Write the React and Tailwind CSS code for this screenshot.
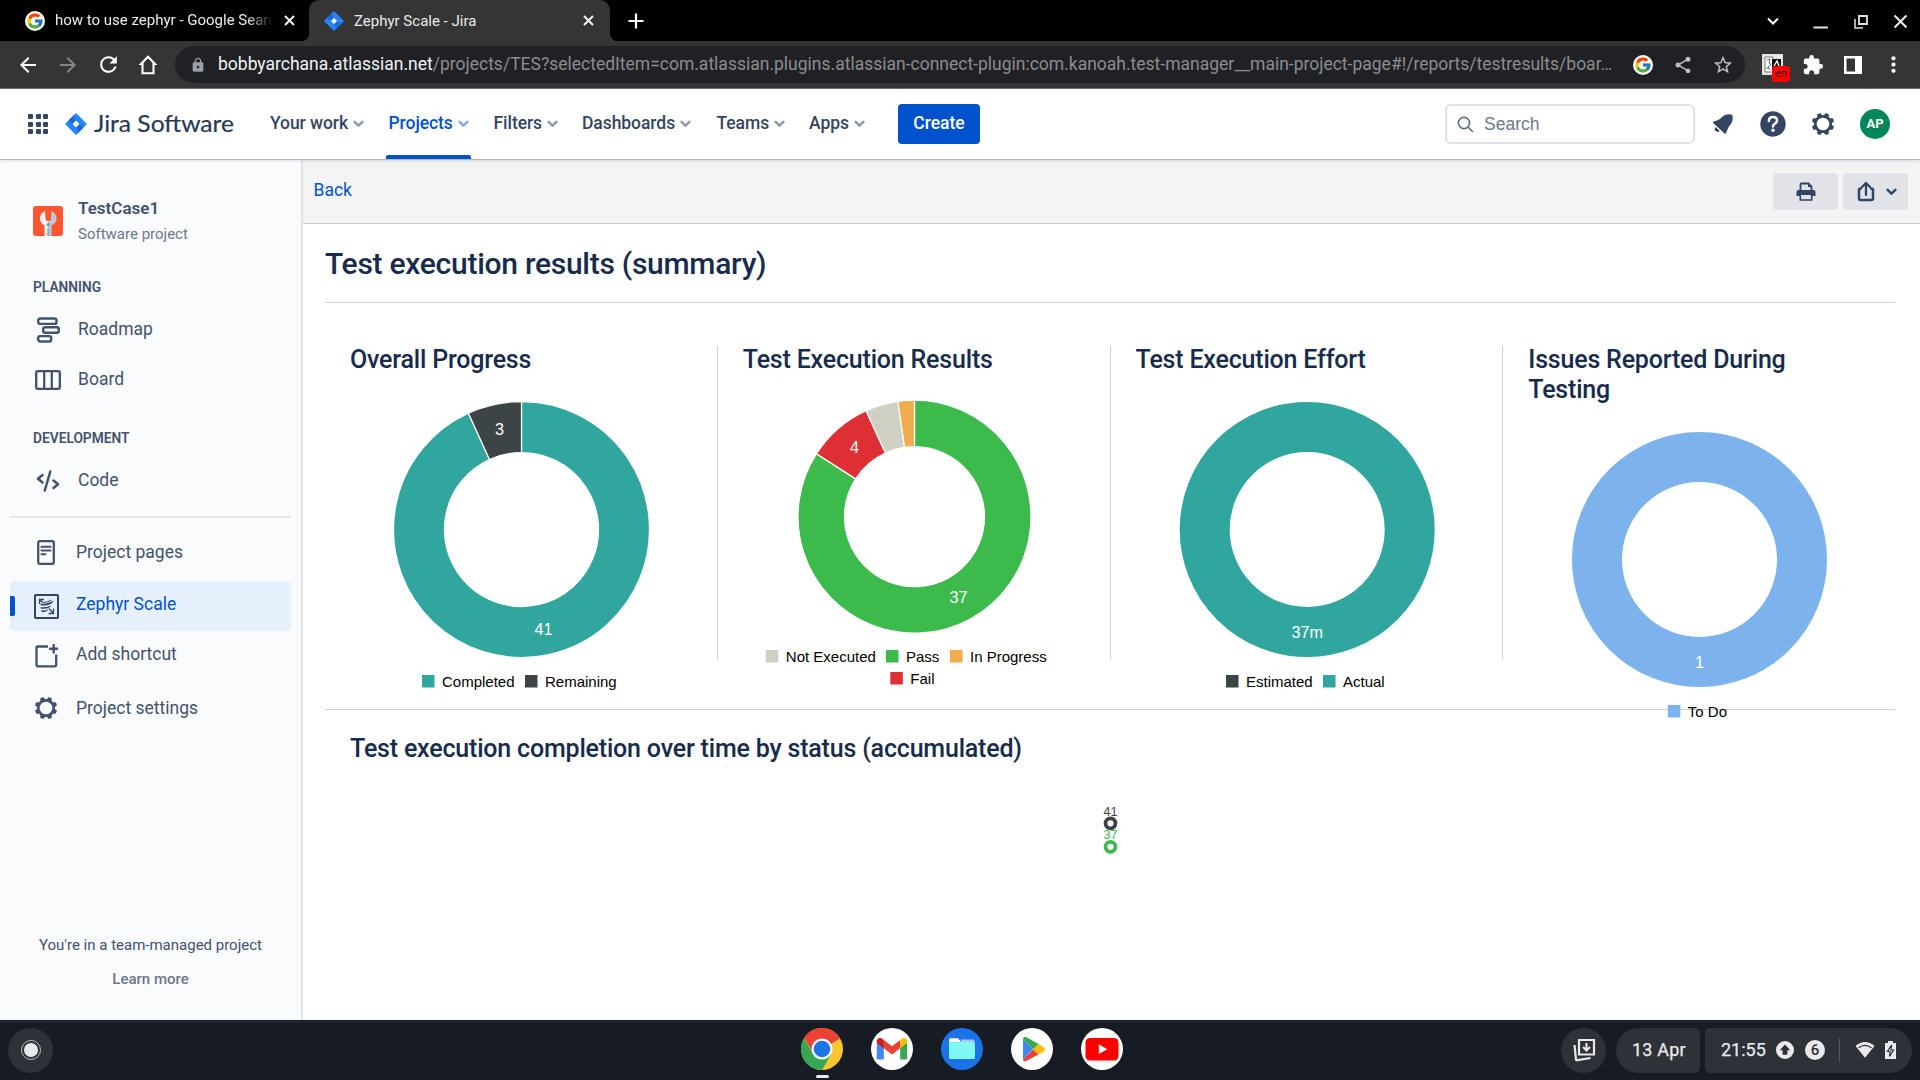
import React from "react";
import { FcGoogle } from "react-icons/fc";
import { MdShare, MdStarBorder, MdExtension, MdMoreVert, MdLock, MdRefresh, MdArrowBack, MdArrowForward } from "react-icons/md";

const TEAL = "#31a69e";
const DARK = "#3d4446";
const GREEN = "#3cba4c";

function JiraMark({ size }) {
  return (
    <svg width={size} height={size} viewBox="0 0 26 26" className="shrink-0">
      <path d="M13 0 L26 13 L13 26 L0 13 Z" fill="#2684ff" />
      <path d="M13 0 C9.5 3.5 9.5 6 13 9.2 L9.2 13 L4 9 Z" fill="#1868db" />
      <path d="M13 26 C16.5 22.500 16.5 20 13 16.800 L16.8 13 L22 17 Z" fill="#1868db" />
      <path d="M13 9 L17 13 L13 17 L9 13 Z" fill="#fff" />
    </svg>
  );
}

function GoogleDisc() {
  return (
    <span className="flex h-5 w-5 shrink-0 items-center justify-center rounded-full bg-white">
      <FcGoogle size={18} />
    </span>
  );
}

function Cross({ size = 11, w = 2 }) {
  return (
    <svg width={size} height={size} viewBox="0 0 11 11" className="shrink-0">
      <path d="M1 1 L10 10 M10 1 L1 10" stroke="#f1f1f1" strokeWidth={w} fill="none" />
    </svg>
  );
}

function Chevron({ color = "#8f99ab", w = 11 }) {
  return (
    <svg width={w} height="8" viewBox="0 0 11 8" className="shrink-0">
      <path d="M1.600 1.800 L5.500 5.700 L9.400 1.800" stroke={color} strokeWidth="2.500" fill="none" strokeLinecap="round" strokeLinejoin="round" />
    </svg>
  );
}

function Gear({ size, color }) {
  return (
    <svg width={size} height={size} viewBox="0 0 24 24" className="shrink-0">
      <circle cx="12" cy="12" r="7.700" fill="none" stroke={color} strokeWidth="2.700" />
      {[22.5, 67.5, 112.5, 157.5, 202.5, 247.5, 292.5, 337.5].map((a) => (
        <path key={a} d="M9.500 4 L10 1.200 Q12 0 14 1.200 L14.500 4 Z" fill={color} transform={`rotate(${a} 12 12)`} />
      ))}
    </svg>
  );
}

function TabStrip() {
  return (
    <div className="flex h-[41px] items-stretch bg-black text-[#e8eaed]">
      <div className="flex w-[309px] items-center pl-[25px]">
        <GoogleDisc />
        <span className="ml-[10px] w-[218px] overflow-hidden whitespace-nowrap [mask-image:linear-gradient(to_right,black_88%,transparent)] text-[15px]">how to use zephyr - Google Search</span>
        <span className="ml-[11px]"><Cross /></span>
      </div>
      <div className="relative flex w-[301px] items-center rounded-t-[10px] bg-[#353535] pl-[15px]">
        <span className="absolute bottom-0 -left-[8px] h-2 w-2 bg-[radial-gradient(circle_at_0_0,transparent_8px,#353535_8.500px)]" />
        <span className="absolute bottom-0 -right-[8px] h-2 w-2 bg-[radial-gradient(circle_at_100%_0,transparent_8px,#353535_8.500px)]" />
        <JiraMark size={20} />
        <span className="ml-[10px] flex-1 pt-px text-[15px]">Zephyr Scale - Jira</span>
        <span className="mr-[16px]"><Cross /></span>
      </div>
      <div className="flex flex-1 items-center pl-[18px]">
        <svg width="16" height="16" viewBox="0 0 16 16"><path d="M8 0.500 V15.500 M0.500 8 H15.500" stroke="#fff" strokeWidth="2.200" /></svg>
      </div>
      <div className="flex w-[160px] items-center pl-[6px]">
        <svg width="154" height="20" viewBox="0 0 154 20">
          <path d="M2 7.500 L7 12.500 L12 7.500" fill="none" stroke="#fff" strokeWidth="2" />
          <path d="M47.500 16.500 H62" stroke="#e4e4e4" strokeWidth="2" />
          <path d="M93 5 H101 V13 H93 Z" fill="none" stroke="#e4e4e4" strokeWidth="1.800" />
          <path d="M89 8 V17 H97" fill="none" stroke="#e4e4e4" strokeWidth="1.500" />
          <path d="M128.500 4.500 L140.500 16.500 M140.500 4.500 L128.500 16.500" stroke="#eee" strokeWidth="2" />
        </svg>
      </div>
    </div>
  );
}

function Toolbar() {
  return (
    <div className="flex h-[48px] items-center border-b border-[#6a6a6a] bg-[#353535] text-white">
      <div className="flex w-[175px] items-center">
        <MdArrowBack size={24} className="ml-[16px]" />
        <MdArrowForward size={24} className="ml-[16px] text-[#858585]" />
        <MdRefresh size={25} className="ml-[16px]" />
        <svg width="18" height="20" viewBox="0 0 18 20" className="ml-[18px]">
          <path d="M9 1.800 L16 9 H14.500 V18.300 H3.500 V9 H2 Z" fill="none" stroke="#fff" strokeWidth="2.100" />
        </svg>
      </div>
      <div className="flex h-[37px] w-[1570px] items-center rounded-full bg-[#202124]">
        <MdLock size={16} className="ml-[15px] text-[#9aa0a6]" />
        <span className="ml-[12px] w-[1398px] text-[17.5px] whitespace-nowrap text-[#8b8d90]">
          <span className="text-[#f1f3f4]">bobbyarchana.atlassian.net</span>/projects/TES?selectedItem=com.atlassian.plugins.atlassian-connect-plugin:com.kanoah.test-manager__main-project-page#!/reports/testresults/boar…
        </span>
        <span className="ml-[17px]"><GoogleDisc /></span>
        <MdShare size={20} className="ml-[20px] text-[#bdc1c6]" />
        <MdStarBorder size={22} className="ml-[19px] text-[#bdc1c6]" />
      </div>
      <div className="relative ml-[17px] h-[21px] w-[21px] border border-[#ddd] bg-[#e9e9e9]">
        <svg width="19" height="19" viewBox="0 0 19 19">
          <path d="M2 2 H10 V17 H2 Z" fill="#fff" stroke="#777" strokeWidth="1" />
          <path d="M4 5 L7 4 L6 8 L8 9 L5 12 L7 15 M3 13 H6" fill="none" stroke="#666" strokeWidth="1" />
          <path d="M9 4 H18 V14 H9 Z" fill="#111" />
          <path d="M11 11 L14 6 L16 11" fill="none" stroke="#fff" strokeWidth="1.300" />
        </svg>
        <span className="absolute top-[11px] left-[9px] flex h-[16px] w-[18px] items-center justify-center rounded-[3px] bg-[#ff0000] pb-px text-[11.5px] leading-none text-[#3a0000]">en</span>
      </div>
      <MdExtension size={22} className="ml-[19px]" />
      <svg width="18" height="18" viewBox="0 0 18 18" className="ml-[20px]">
        <path d="M0 0 H18 V18 H0 Z M2.500 2.500 V15.500 H11 V2.500 Z" fill="#fff" fillRule="evenodd" />
      </svg>
      <MdMoreVert size={25} className="ml-[19px]" />
    </div>
  );
}

const NAV = [
  { t: "Your work", w: 118.5 },
  { t: "Projects", w: 105 },
  { t: "Filters", w: 88.5 },
  { t: "Dashboards", w: 134.5 },
  { t: "Teams", w: 92.5 },
  { t: "Apps", w: 89 },
];

function Header() {
  return (
    <div className="relative z-10 flex h-[71px] items-center border-b border-[#b5b6bb] bg-white shadow-[0_1px_4px_rgba(9,30,66,0.13)]">
      <div className="ml-[28px] grid grid-cols-3 gap-[2.500px]">
        {[0, 1, 2, 3, 4, 5, 6, 7, 8].map((i) => (
          <span key={i} className="h-[5px] w-[5px] rounded-[1px] bg-[#344563]" />
        ))}
      </div>
      <div className="ml-[17px]"><JiraMark size={22} /></div>
      <svg width="176" height="34" viewBox="0 0 176 34" className="ml-[7px]">
        <text x="0" y="24.500" textLength="140" lengthAdjust="spacingAndGlyphs" fontFamily="Lato, sans-serif" fontSize="23.500" fill="#253858" stroke="#253858" strokeWidth="0.200">Jira Software</text>
      </svg>
      {NAV.map((n) => {
        const on = n.t === "Projects";
        return (
          <div
            key={n.t}
            style={{ width: n.w }}
            className={`relative flex h-full items-center gap-[5px] text-[17.5px] font-medium tracking-[-0.06px] whitespace-nowrap ${on ? "text-[#0052cc]" : "text-[#344563]"}`}
          >
            <span className="pb-[2px]">{n.t}</span>
            <Chevron color={on ? "#7fa8e5" : "#8f99ab"} />
            {on && <span className="absolute bottom-0 -left-[3px] h-[4px] w-[85px] rounded-t-[2px] bg-[#0052cc]" />}
          </div>
        );
      })}
      <button className="h-[40px] w-[82px] rounded-[4px] bg-[#0052cc] pb-[2px] text-[17.5px] font-medium text-white">Create</button>
      <div className="ml-auto flex h-[40px] w-[250px] items-center rounded-[6px] border-2 border-[#dfe1e6] pl-[10px]">
        <svg width="17" height="17" viewBox="0 0 17 17">
          <circle cx="7" cy="7" r="5.600" fill="none" stroke="#5e6c84" strokeWidth="1.600" />
          <path d="M11.200 11.200 L15.500 15.500" stroke="#5e6c84" strokeWidth="1.600" strokeLinecap="round" />
        </svg>
        <span className="ml-[10px] font-['Liberation_Sans',sans-serif] text-[17.5px] text-[#6b778c]">Search</span>
      </div>
      <svg width="22" height="22" viewBox="0 0 22 22" className="ml-[17px]">
        <path d="M20.300 1.800 Q13.500 0 10 4 Q8 6.500 5 7.500 L1.200 8.700 Q0.500 9.300 1.200 10 L12.500 20.500 Q13.500 21.300 14 20.300 L15.500 16.500 Q16.500 13.500 18.500 11.500 Q21.800 7.500 20.300 1.800 Z" fill="#344563" />
        <path d="M3.500 14 Q1.800 16.800 4 18.300 Q6 19.500 7.800 17.900 Z" fill="#344563" />
      </svg>
      <svg width="26" height="26" viewBox="0 0 26 26" className="ml-[26px]">
        <circle cx="13" cy="13" r="12.700" fill="#344563" />
        <path d="M8.900 10 Q8.900 6 13 6 Q17 6 17 9.600 Q17 11.600 14.800 12.800 Q13 13.900 13 15.600" fill="none" stroke="#fff" strokeWidth="2.500" strokeLinecap="round" />
        <circle cx="13" cy="19.300" r="1.700" fill="#fff" />
      </svg>
      <div className="ml-[25px]"><Gear size={24} color="#344563" /></div>
      <div className="mr-[30px] ml-[25px] flex h-[30px] w-[30px] items-center justify-center rounded-full bg-[#00875a] text-[13px] font-bold text-white">AP</div>
    </div>
  );
}

const INK = "#42526e";

function RoadmapIcon() {
  return (
    <svg width="26" height="26" viewBox="0 0 26 26">
      <g fill="none" stroke={INK} strokeWidth="2.400">
        <rect x="3.200" y="1.500" width="18.300" height="5.400" rx="2" />
        <rect x="8.200" y="10.300" width="15.600" height="5.400" rx="2" />
        <rect x="3.200" y="19.100" width="13" height="5.400" rx="2" />
      </g>
    </svg>
  );
}
function BoardIcon() {
  return (
    <svg width="26" height="20" viewBox="0 0 26 20">
      <rect x="1.200" y="1.200" width="23.600" height="17.600" rx="1.500" fill="none" stroke={INK} strokeWidth="2.300" />
      <path d="M9.200 1 V19 M16.800 1 V19" stroke={INK} strokeWidth="2.200" />
    </svg>
  );
}
function CodeIcon() {
  return (
    <svg width="24" height="22" viewBox="0 0 24 22">
      <path d="M6.500 5 L2 8.700 L6.500 12.500 M17.500 10.500 L22 14.300 L17.500 18 M14.300 1.500 L8.800 20.500" fill="none" stroke={INK} strokeWidth="2.500" strokeLinecap="round" strokeLinejoin="round" />
    </svg>
  );
}
function PageIcon() {
  return (
    <svg width="18" height="25" viewBox="0 0 18 25">
      <rect x="1.200" y="1.200" width="15.600" height="22.600" rx="1.500" fill="none" stroke={INK} strokeWidth="2.300" />
      <path d="M4.500 6.700 H13.500 M4.500 10.500 H13.500 M4.500 14.300 H8.500" stroke={INK} strokeWidth="2" strokeLinecap="round" />
    </svg>
  );
}
function ZephyrIcon() {
  return (
    <svg width="25" height="25" viewBox="0 0 25 25">
      <rect x="1" y="1" width="23" height="23" rx="0.800" fill="none" stroke="#344563" strokeWidth="2" />
      <path d="M5.500 10 V5.500 H10 M6 6 L8.500 8.500 M19.500 14.500 V19.500 H14.500 M15 14.500 L19 19" fill="none" stroke="#344563" strokeWidth="1.300" />
      <path d="M6.500 9.500 Q11 10.800 20 6.500 Q17 12.500 6.500 11.300 Z M6.500 13 Q12 14 17.500 11.500 Q15 15.500 7 14.700 Z M7 16.300 Q11 16.800 14.500 15.200 Q12.500 19 7.800 17.900 Z" fill="#344563" />
      <path d="M9 8.500 Q14 8.300 17.500 6" fill="none" stroke="#344563" strokeWidth="1" />
    </svg>
  );
}
function AddIcon() {
  return (
    <svg width="23" height="24" viewBox="0 0 23 24">
      <path d="M13 2.500 H2.500 Q1.500 2.500 1.500 3.500 V21 Q1.500 22.300 2.500 22.300 H20 Q21.200 22.300 21.200 21 V10.500" fill="none" stroke={INK} strokeWidth="2.300" />
      <path d="M18.700 1 V8.500 M15 4.700 H22.500" stroke={INK} strokeWidth="2.400" strokeLinecap="round" />
    </svg>
  );
}

function Item({ icon, label, wide, active, low }) {
  return (
    <div className={`relative mx-[10px] flex h-[50px] items-center rounded-[5px] ${active ? "bg-[#e6effc]" : ""}`}>
      {active && <span className="absolute top-[15px] left-0 h-[20px] w-[5px] rounded-r-[2px] bg-[#0052cc]" />}
      <span className={`flex w-[28px] items-center justify-center ${wide ? "ml-[24px] pt-[1px]" : "ml-[22px]"}`}>{icon}</span>
      <span className={`text-[17.5px] ${low ? "" : "pb-[3px]"} ${wide ? "ml-[16px]" : "ml-[16px]"} ${active ? "text-[#0052cc]" : "text-[#42526e]"}`}>{label}</span>
    </div>
  );
}

function Sidebar() {
  return (
    <div className="flex w-[303px] shrink-0 flex-col border-r-2 border-[#e2e3e7] bg-[#fafbfd]">
      <div className="mt-[36px] flex h-[62px] items-start pl-[33px]">
        <svg width="30" height="30" viewBox="0 0 30 30" className="mt-[10px]">
          <rect width="30" height="30" rx="3" fill="#ff5630" />
          <path d="M12 5 Q6.500 7.500 7 13.500 Q7.500 17 11.500 19.500 V30 H15 V15 Q12.500 15 12.500 13 Z" fill="#eef2f5" />
          <path d="M18.500 5 Q24 7.500 23.500 13.500 Q23 17 18.500 19.500 V30 H15 V15 Q18 15 18 13 Z" fill="#b8cbd6" />
          <circle cx="15.300" cy="18.800" r="1.700" fill="#7f9cab" />
          <path d="M14.300 22.500 H16.300 V30 H14.300 Z" fill="#8faab8" />
        </svg>
        <div className="ml-[15px] text-[#42526e]">
          <div className="h-[26px] text-[17px] leading-[24px] font-semibold">TestCase1</div>
          <div className="text-[15px] leading-[25px] text-[#6b778c]">Software project</div>
        </div>
      </div>
      <div className="mt-[17px] h-[29px] pl-[33px] text-[13.75px] leading-[24px] font-semibold text-[#42526e]">PLANNING</div>
      <Item wide low icon={<RoadmapIcon />} label="Roadmap" />
      <Item wide low icon={<BoardIcon />} label="Board" />
      <div className="mt-[22px] h-[29px] pl-[33px] text-[13.75px] leading-[24px] font-semibold text-[#42526e]">DEVELOPMENT</div>
      <Item wide low icon={<CodeIcon />} label="Code" />
      <div className="mx-[10px] mt-[11px] mb-[9px] h-[2px] bg-[#e6e8eb]" />
      <Item low icon={<PageIcon />} label="Project pages" />
      <div className="h-[4px]" />
      <Item icon={<ZephyrIcon />} label="Zephyr Scale" active />
      <Item icon={<AddIcon />} label="Add shortcut" />
      <div className="h-[2px]" />
      <Item low icon={<Gear size={24} color={INK} />} label="Project settings" />
      <div className="mt-auto mb-[29px] flex flex-col items-center text-[15px] text-[#42526e]">
        <div className="leading-[24px]">You're in a team-managed project</div>
        <div className="mt-[10px] text-[15px] leading-[24px] font-medium text-[#6b778c]">Learn more</div>
      </div>
    </div>
  );
}

function slicePath(cx, cy, R, r, a0, a1) {
  const p = (rad, a) => `${cx + rad * Math.sin(a)} ${cy - rad * Math.cos(a)}`;
  const big = a1 - a0 > Math.PI ? 1 : 0;
  return `M${p(R, a0)} A${R} ${R} 0 ${big} 1 ${p(R, a1)} L${p(r, a1)} A${r} ${r} 0 ${big} 0 ${p(r, a0)} Z`;
}

function Donut({ cx, cy, R, r, slices, legend }) {
  const total = slices.reduce((s, x) => s + x.v, 0);
  let acc = 0;
  return (
    <svg width="343" height="300" viewBox="0 0 343 300" className="block overflow-visible font-['Liberation_Sans',sans-serif]">
      {slices.length === 1 ? (
        <circle cx={cx} cy={cy} r={(R + r) / 2} fill="none" stroke={slices[0].c} strokeWidth={R - r} />
      ) : (
        slices.map((s) => {
          const a0 = (acc / total) * Math.PI * 2;
          acc += s.v;
          const a1 = (acc / total) * Math.PI * 2;
          return <path key={s.c} d={slicePath(cx, cy, R, r, a0, a1)} fill={s.c} stroke="#fff" strokeWidth="1.250" />;
        })
      )}
      {slices.filter((s) => s.label).map((s) => (
        <text key={s.label} x={s.x} y={s.y} fontSize="16.250" fill="#fff" textAnchor="middle">{s.label}</text>
      ))}
      {legend.map((l) => (
        <g key={l.t}>
          <rect x={l.x} y={l.y} width="12.500" height="12.500" fill={l.c} />
          <text x={l.x + 20} y={l.y + 12.2} fontSize="15" fill="#000">{l.t}</text>
        </g>
      ))}
    </svg>
  );
}

const CHARTS = [
  {
    title: "Overall Progress",
    chart: {
      cx: 171.5, cy: 154.5, R: 128, r: 77,
      slices: [
        { v: 41, c: TEAL, label: "41", x: 193.5, y: 260 },
        { v: 3, c: DARK, label: "3", x: 149.5, y: 60 },
      ],
      legend: [
        { t: "Completed", c: TEAL, x: 72, y: 300 },
        { t: "Remaining", c: DARK, x: 175, y: 300 },
      ],
    },
  },
  {
    title: "Test Execution Results",
    chart: {
      cx: 171.5, cy: 141.7, R: 116.5, r: 70,
      slices: [
        { v: 37, c: GREEN, label: "37", x: 215.5, y: 228 },
        { v: 4, c: "#de2f35", label: "4", x: 111.5, y: 78 },
        { v: 2, c: "#cfcfc4" },
        { v: 1, c: "#f0ad4e" },
      ],
      legend: [
        { t: "Not Executed", c: "#cfcfc4", x: 22.8, y: 275 },
        { t: "Pass", c: GREEN, x: 143, y: 275 },
        { t: "In Progress", c: "#f0ad4e", x: 207, y: 275 },
        { t: "Fail", c: "#de2f35", x: 147.3, y: 297 },
      ],
    },
  },
  {
    title: "Test Execution Effort",
    chart: {
      cx: 171.2, cy: 154.5, R: 127.5, r: 77.5,
      slices: [{ v: 1, c: TEAL, label: "37m", x: 171.2, y: 263 }],
      legend: [
        { t: "Estimated", c: DARK, x: 90, y: 300 },
        { t: "Actual", c: TEAL, x: 187, y: 300 },
      ],
    },
  },
  {
    title: "Issues Reported During Testing",
    chart: {
      cx: 171.5, cy: 154.5, R: 127.5, r: 77.5,
      slices: [{ v: 1, c: "#7cb3ec", label: "1", x: 171.5, y: 263 }],
      legend: [{ t: "To Do", c: "#7cb3ec", x: 139.800, y: 300 }],
    },
  },
];

function Main() {
  return (
    <div className="flex flex-1 flex-col bg-white text-[#172b4d]">
      <div className="flex h-[64px] shrink-0 items-start border-b border-[#c9cacc] bg-[#f4f4f4] pt-[13px]">
        <span className="ml-[10.500px] text-[17.5px] leading-[34px] text-[#0052cc]">Back</span>
        <button className="ml-auto flex h-[37px] w-[65px] items-center justify-center rounded-[4px] bg-[#e1e3e8]">
          <svg width="20" height="20" viewBox="0 0 20 20">
            <path d="M4.500 9 V2.500 Q4.500 1.500 5.500 1.500 H12.500 L15.500 4.500 V9" fill="none" stroke="#344563" strokeWidth="1.800" />
            <path d="M12 1 L16 5 H12 Z" fill="#344563" />
            <path d="M2.500 8 H17.500 Q19.500 8 19.500 10 V14 H0.500 V10 Q0.500 8 2.500 8 Z" fill="#344563" />
            <path d="M4.300 13 V18 H15.700 V13" fill="#e1e3e8" stroke="#344563" strokeWidth="1.600" />
          </svg>
        </button>
        <button className="mr-[12px] ml-[5px] flex h-[37px] w-[65px] items-center justify-center gap-[11px] rounded-[4px] bg-[#e1e3e8]">
          <svg width="18" height="21" viewBox="0 0 18 21" className="ml-[2px]">
            <path d="M5 7.500 H3.500 Q2 7.500 2 9 V17.500 Q2 19 3.500 19 H14.500 Q16 19 16 17.500 V9 Q16 7.500 14.500 7.500 H13" fill="none" stroke="#344563" strokeWidth="2.500" />
            <path d="M9 14 V2.500 M5 6 L9 2 L13 6" fill="none" stroke="#344563" strokeWidth="2.300" strokeLinejoin="round" strokeLinecap="round" />
          </svg>
          <Chevron color="#344563" />
        </button>
      </div>
      <div className="pr-[25px] pl-[22px]">
        <h1 className="flex h-[79px] items-center border-b border-[#cfcfcf] text-[30px] font-medium tracking-[-0.27px]">Test execution results (summary)</h1>
        <div className="flex h-[407px] border-b border-[#cfcfcf] pt-[43px]">
          {CHARTS.map((c, i) => (
            <div key={c.title} className={`h-[313px] flex-1 pl-[25px] ${i < 3 ? "border-r border-[#cfcfcf]" : ""}`}>
              <h2 className="-mt-[1px] w-[300px] text-[25px] leading-[30px] font-medium tracking-[-0.19px]">{c.title}</h2>
              <Donut {...c.chart} />
            </div>
          ))}
        </div>
        <h2 className="pt-[24px] pl-[25px] text-[25px] leading-[30px] font-medium tracking-[-0.19px]">Test execution completion over time by status (accumulated)</h2>
        <svg width="1570" height="90" viewBox="0 0 1570 90" className="mt-[36px] font-['Liberation_Sans',sans-serif]">
          <text x="785.500" y="16" fontSize="12.500" fill={DARK} textAnchor="middle">41</text>
          <text x="785.500" y="39" fontSize="12.500" fill={GREEN} textAnchor="middle">37</text>
          <circle cx="785.500" cy="23.300" r="5" fill="#fff" stroke={DARK} strokeWidth="3.800" />
          <circle cx="785.500" cy="46.800" r="5" fill="#fff" stroke={GREEN} strokeWidth="3.800" />
        </svg>
      </div>
    </div>
  );
}

function ShelfApps() {
  return (
    <div className="flex items-start gap-[28px] pt-[8px]">
      <div className="flex w-[42px] flex-col items-center">
        <svg width="42" height="42" viewBox="0 0 42 42">
          <circle cx="21" cy="21" r="21" fill="#fbc531" />
          <path d="M21 21 L2.800 10.500 A21 21 0 0 1 39.200 10.500 Z" fill="#ea4335" />
          <path d="M2.800 10.500 A21 21 0 0 0 21 42 L30.100 26.250 L21 21 L11.900 26.250 Z" fill="#34a853" />
          <path d="M3.500 10.500 L12 25 L21 10.500 Z" fill="#ea4335" />
          <path d="M2.800 10.500 L12.200 26 L7 30 L1 20 Z" fill="#34a853" />
          <circle cx="21" cy="21" r="10.500" fill="#fff" />
          <circle cx="21" cy="21" r="8.300" fill="#1a73e8" />
        </svg>
        <span className="mt-[5px] h-[3px] w-[13px] rounded-full bg-[#e8eaed]" />
      </div>
      <svg width="42" height="42" viewBox="0 0 42 42">
        <circle cx="21" cy="21" r="21" fill="#fff" />
        <path d="M5.800 15 H12.800 V31.500 H7.500 Q5.800 31.500 5.800 30 Z" fill="#4285f4" />
        <path d="M29.200 15 H36.200 V30 Q36.200 31.500 34.500 31.500 H29.200 Z" fill="#34a853" />
        <path d="M12.800 12 L21 18.300 L29.200 12 V20.200 L21 26.500 L12.800 20.200 Z" fill="#ea4335" />
        <path d="M5.800 15 V12.500 A3.500 3.500 0 0 1 11.400 10.700 L12.800 12 V20.200 Z" fill="#c5221f" />
        <path d="M36.200 15 V12.500 A3.500 3.500 0 0 0 30.600 10.700 L29.200 12 V20.200 Z" fill="#fbbc04" />
      </svg>
      <svg width="42" height="42" viewBox="0 0 42 42">
        <circle cx="21" cy="21" r="21" fill="#1a73e8" />
        <path d="M20 11.500 H32 Q33.500 11.500 33.500 13 V15 H20 Z" fill="#a9c9f7" />
        <path d="M8 12 Q8 10.300 9.500 10.300 H17 L20.500 14.500 H8 Z" fill="#fff" />
        <path d="M8 14.300 H32.500 Q34 14.300 34 15.800 V29.500 Q34 31 32.500 31 H9.500 Q8 31 8 29.500 Z" fill="#80f8f4" />
      </svg>
      <svg width="42" height="42" viewBox="0 0 42 42">
        <circle cx="21" cy="21" r="21" fill="#fff" />
        <path d="M12 11 L22 21 L12 31.500 Z" fill="#4285f4" />
        <path d="M12 11 Q12 8 15 9 L27.500 16 L22.300 21.300 Z" fill="#34a853" />
        <path d="M12 31.500 Q12 34 15 33 L27.500 26.500 L22.300 21.300 Z" fill="#ea4335" />
        <path d="M27.500 16 L33 19.300 Q35 21.300 33 23.300 L27.500 26.500 L22.300 21.300 Z" fill="#fbbc04" />
      </svg>
      <svg width="42" height="42" viewBox="0 0 42 42">
        <circle cx="21" cy="21" r="21" fill="#fff" />
        <rect x="4.500" y="10" width="33" height="22.500" rx="4.500" fill="#ff0000" />
        <path d="M17.800 16.300 L26.300 21.200 L17.800 26 Z" fill="#fff" />
      </svg>
    </div>
  );
}

function Shelf() {
  return (
    <div className="flex h-[60px] bg-[#171b23] shadow-[inset_0_1px_0_#171b23,inset_0_2px_0_#2a2d34]">
      <div className="flex w-[801px] items-center pl-[8px]">
        <div className="flex h-[45px] w-[45px] items-center justify-center rounded-full bg-[#2f3138]">
          <div className="flex h-[20px] w-[20px] items-center justify-center rounded-full border-[1.500px] border-[#b9babd]">
            <div className="h-[14px] w-[14px] rounded-full bg-[#e8eaed]" />
          </div>
        </div>
      </div>
      <ShelfApps />
      <div className="ml-auto flex items-center pr-[8px] text-[18px] text-[#e8eaed]">
        <div className="flex h-[45px] w-[45px] items-center justify-center rounded-full bg-[#2f3138]">
          <svg width="24" height="24" viewBox="0 0 24 24">
            <path d="M7 2 H22 V16.500 H7 Z" fill="none" stroke="#e8eaed" strokeWidth="2.200" />
            <path d="M2.500 7 L4 21.500 Q4 22.500 5.500 22.200 L18.500 20" fill="none" stroke="#e8eaed" strokeWidth="2.200" />
            <path d="M14.500 5 V12 M11 9 L14.500 12.500 L18 9" fill="none" stroke="#e8eaed" strokeWidth="2.100" />
          </svg>
        </div>
        <div className="ml-[10px] flex h-[45px] w-[84px] items-center rounded-l-[22.500px] rounded-r-[5px] bg-[#2f3138] pb-px pl-[16px] tracking-[0.2px] whitespace-nowrap [-webkit-text-stroke:0.25px_#e8eaed]">13 Apr</div>
        <div className="ml-[5px] flex h-[45px] w-[207px] items-center rounded-l-[5px] rounded-r-[22.500px] bg-[#2f3138] pl-[16px]">
          <span className="w-[45px] pb-px [-webkit-text-stroke:0.25px_#e8eaed]">21:55</span>
          <svg width="18" height="18" viewBox="0 0 18 18" className="ml-[10px]">
            <circle cx="9" cy="9" r="9" fill="#e8eaed" />
            <path d="M9 3.500 L14.200 9.300 H11.400 V13.800 H6.600 V9.300 H3.800 Z" fill="#2f3138" />
          </svg>
          <span className="ml-[11px] flex h-[20px] w-[20px] items-center justify-center rounded-full bg-[#e8eaed] text-[15px] font-medium text-[#2f3138]">6</span>
          <span className="ml-[14px] h-[24px] w-px bg-[#55575d]" />
          <svg width="20" height="16" viewBox="0 0 20 16" className="ml-[15px]">
            <path d="M0.500 4 Q10 -4 19.500 4 L10 15.800 Z" fill="#e8eaed" />
            <path d="M3.500 5.800 Q10 0.800 16.500 5.800" fill="none" stroke="#2f3138" strokeWidth="1.300" />
          </svg>
          <svg width="11" height="18" viewBox="0 0 11 18" className="ml-[10px]">
            <path d="M3 0 H8 V2 H11 V18 H0 V2 H3 Z" fill="#e8eaed" />
            <path d="M6.500 4 L2.500 10.500 H5 L4.500 15.500 L8.500 9 H6 Z" fill="none" stroke="#2f3138" strokeWidth="1.200" />
          </svg>
        </div>
      </div>
    </div>
  );
}

export default function App() {
  return (
    <div className="flex h-[1080px] w-[1920px] flex-col overflow-hidden bg-white font-[Roboto,sans-serif]">
      <TabStrip />
      <Toolbar />
      <Header />
      <div className="flex min-h-0 flex-1">
        <Sidebar />
        <Main />
      </div>
      <Shelf />
    </div>
  );
}
